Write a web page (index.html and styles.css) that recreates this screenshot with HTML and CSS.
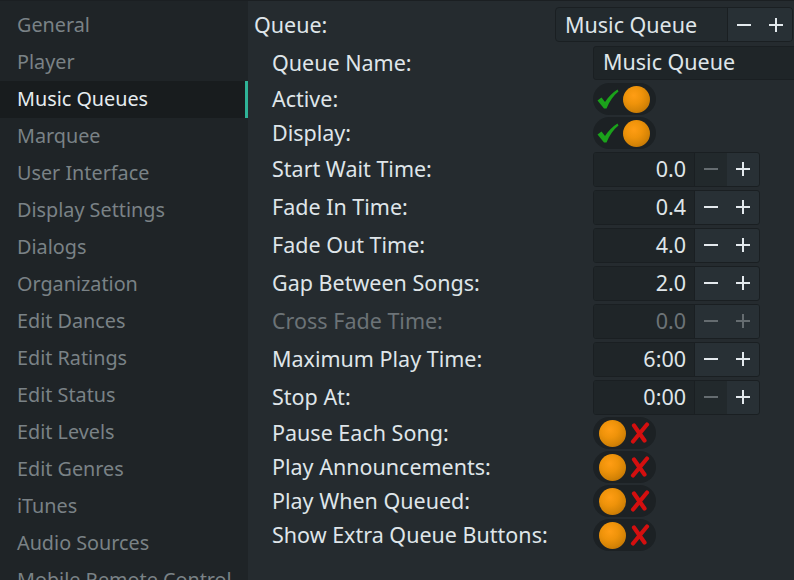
FILE: index.html
```html
<!DOCTYPE html>
<html>
<head>
<meta charset="utf-8">
<link rel="stylesheet" href="styles.css">
</head>
<body>
<div class="app">
  <nav class="sidebar">
    <div class="nav-item">General</div>
    <div class="nav-item">Player</div>
    <div class="nav-item selected">Music Queues</div>
    <div class="nav-item">Marquee</div>
    <div class="nav-item">User Interface</div>
    <div class="nav-item">Display Settings</div>
    <div class="nav-item">Dialogs</div>
    <div class="nav-item">Organization</div>
    <div class="nav-item">Edit Dances</div>
    <div class="nav-item">Edit Ratings</div>
    <div class="nav-item">Edit Status</div>
    <div class="nav-item">Edit Levels</div>
    <div class="nav-item">Edit Genres</div>
    <div class="nav-item">iTunes</div>
    <div class="nav-item">Audio Sources</div>
    <div class="nav-item">Mobile Remote Control</div>
  </nav>
  <main class="main">
    <div class="queue-row">
      <div class="queue-label">Queue:</div>
      <div class="combo">
        <div class="combo-text">Music Queue</div>
        <div class="combo-btns">
          <span class="sbtn"><svg width="14" height="14" viewBox="0 0 14 14"><path d="M0 7H14" stroke="currentColor" stroke-width="2"/></svg></span>
          <span class="sbtn"><svg width="14" height="14" viewBox="0 0 14 14"><path d="M0 7H14M7 0V14" stroke="currentColor" stroke-width="2"/></svg></span>
        </div>
      </div>
    </div>
    <div class="form">
      <div class="row r38"><div class="label">Queue Name:</div><div class="entry">Music Queue</div></div>

      <div class="row r34"><div class="label">Active:</div>
        <div class="toggle on"><svg class="check" width="22" height="20" viewBox="0 0 22 20"><path d="M0.5 11.5 L4.5 8.5 L8 13 C11.5 8 15.5 3.5 20.5 0.5 L21.5 2.5 C16.5 6.5 12.5 12 9.5 19.5 L7 19.5 Z" fill="#1ba21b"/></svg><span class="knob"></span></div>
      </div>
      <div class="row r34"><div class="label">Display:</div>
        <div class="toggle on"><svg class="check" width="22" height="20" viewBox="0 0 22 20"><path d="M0.5 11.5 L4.5 8.5 L8 13 C11.5 8 15.5 3.5 20.5 0.5 L21.5 2.5 C16.5 6.5 12.5 12 9.5 19.5 L7 19.5 Z" fill="#1ba21b"/></svg><span class="knob"></span></div>
      </div>

      <div class="row r38"><div class="label">Start Wait Time:</div>
        <div class="spin"><div class="spin-val">0.0</div>
          <span class="sbtn dis"><svg width="14" height="14" viewBox="0 0 14 14"><path d="M0 7H14" stroke="currentColor" stroke-width="2"/></svg></span>
          <span class="sbtn"><svg width="14" height="14" viewBox="0 0 14 14"><path d="M0 7H14M7 0V14" stroke="currentColor" stroke-width="2"/></svg></span>
        </div>
      </div>
      <div class="row r38"><div class="label">Fade In Time:</div>
        <div class="spin"><div class="spin-val">0.4</div>
          <span class="sbtn"><svg width="14" height="14" viewBox="0 0 14 14"><path d="M0 7H14" stroke="currentColor" stroke-width="2"/></svg></span>
          <span class="sbtn"><svg width="14" height="14" viewBox="0 0 14 14"><path d="M0 7H14M7 0V14" stroke="currentColor" stroke-width="2"/></svg></span>
        </div>
      </div>
      <div class="row r38"><div class="label">Fade Out Time:</div>
        <div class="spin"><div class="spin-val">4.0</div>
          <span class="sbtn"><svg width="14" height="14" viewBox="0 0 14 14"><path d="M0 7H14" stroke="currentColor" stroke-width="2"/></svg></span>
          <span class="sbtn"><svg width="14" height="14" viewBox="0 0 14 14"><path d="M0 7H14M7 0V14" stroke="currentColor" stroke-width="2"/></svg></span>
        </div>
      </div>
      <div class="row r38"><div class="label">Gap Between Songs:</div>
        <div class="spin"><div class="spin-val">2.0</div>
          <span class="sbtn"><svg width="14" height="14" viewBox="0 0 14 14"><path d="M0 7H14" stroke="currentColor" stroke-width="2"/></svg></span>
          <span class="sbtn"><svg width="14" height="14" viewBox="0 0 14 14"><path d="M0 7H14M7 0V14" stroke="currentColor" stroke-width="2"/></svg></span>
        </div>
      </div>
      <div class="row r38 disabled"><div class="label">Cross Fade Time:</div>
        <div class="spin"><div class="spin-val">0.0</div>
          <span class="sbtn dis"><svg width="14" height="14" viewBox="0 0 14 14"><path d="M0 7H14" stroke="currentColor" stroke-width="2"/></svg></span>
          <span class="sbtn dis"><svg width="14" height="14" viewBox="0 0 14 14"><path d="M0 7H14M7 0V14" stroke="currentColor" stroke-width="2"/></svg></span>
        </div>
      </div>
      <div class="row r38"><div class="label">Maximum Play Time:</div>
        <div class="spin"><div class="spin-val">6:00</div>
          <span class="sbtn"><svg width="14" height="14" viewBox="0 0 14 14"><path d="M0 7H14" stroke="currentColor" stroke-width="2"/></svg></span>
          <span class="sbtn"><svg width="14" height="14" viewBox="0 0 14 14"><path d="M0 7H14M7 0V14" stroke="currentColor" stroke-width="2"/></svg></span>
        </div>
      </div>
      <div class="row r38"><div class="label">Stop At:</div>
        <div class="spin"><div class="spin-val">0:00</div>
          <span class="sbtn dis"><svg width="14" height="14" viewBox="0 0 14 14"><path d="M0 7H14" stroke="currentColor" stroke-width="2"/></svg></span>
          <span class="sbtn"><svg width="14" height="14" viewBox="0 0 14 14"><path d="M0 7H14M7 0V14" stroke="currentColor" stroke-width="2"/></svg></span>
        </div>
      </div>

      <div class="row r34"><div class="label">Pause Each Song:</div>
        <div class="toggle off"><span class="knob"></span><svg class="cross" width="20" height="22" viewBox="0 0 20 22"><path d="M4 3.5 L14.5 18.5 M17 2.5 L3 19.5" stroke="#d40f0f" stroke-width="4.2" stroke-linecap="round"/></svg></div>
      </div>
      <div class="row r34"><div class="label">Play Announcements:</div>
        <div class="toggle off"><span class="knob"></span><svg class="cross" width="20" height="22" viewBox="0 0 20 22"><path d="M4 3.5 L14.5 18.5 M17 2.5 L3 19.5" stroke="#d40f0f" stroke-width="4.2" stroke-linecap="round"/></svg></div>
      </div>
      <div class="row r34"><div class="label">Play When Queued:</div>
        <div class="toggle off"><span class="knob"></span><svg class="cross" width="20" height="22" viewBox="0 0 20 22"><path d="M4 3.5 L14.5 18.5 M17 2.5 L3 19.5" stroke="#d40f0f" stroke-width="4.2" stroke-linecap="round"/></svg></div>
      </div>
      <div class="row r34"><div class="label">Show Extra Queue Buttons:</div>
        <div class="toggle off"><span class="knob"></span><svg class="cross" width="20" height="22" viewBox="0 0 20 22"><path d="M4 3.5 L14.5 18.5 M17 2.5 L3 19.5" stroke="#d40f0f" stroke-width="4.2" stroke-linecap="round"/></svg></div>
      </div>
    </div>
  </main>
</div>
</body>
</html>
```
FILE: styles.css
```css
html, body {
  margin: 0;
  padding: 0;
  height: 100%;
  overflow: hidden;
  background: #252b2f;
  font-family: "Noto Sans", "Open Sans", sans-serif;
  font-size: 20px;
  color: #dfe5e9;
}

.app {
  display: flex;
  height: 580px;
  box-sizing: border-box;
  border-top: 1px solid #1b1f22;
}

.sidebar {
  width: 248px;
  flex: none;
  background: #1f2427;
  padding-top: 6px;
  box-sizing: border-box;
  overflow: hidden;
  font-size: 19.8px;
}

.nav-item {
  height: 37px;
  box-sizing: border-box;
  line-height: 36px;
  padding-bottom: 1px;
  padding-left: 17px;
  color: #7a8286;
  white-space: nowrap;
}

.nav-item.selected {
  background: #181c1e;
  color: #e6ecf0;
  box-shadow: inset -3px 0 0 #2fb397;
}

.main {
  flex: 1;
  padding: 6px 0 0 6px;
  overflow: hidden;
  min-width: 0;
  font-size: 21.5px;
}

.queue-row {
  display: flex;
  align-items: center;
  height: 35px;
}

.queue-label {
  width: 301px;
  flex: none;
}

.combo {
  display: flex;
  width: 238px;
  height: 35px;
  box-sizing: border-box;
  border: 1px solid #1a1f22;
  border-radius: 4px;
  background: #232a2e;
  overflow: hidden;
  flex: none;
}

.combo-text {
  flex: 1;
  padding-left: 9px;
  line-height: 33px;
  border-right: 1px solid #1a1f22;
}

.combo-btns {
  display: flex;
  background: #283035;
}

.form {
  margin-top: 2px;
  padding-left: 18px;
}

.row {
  display: flex;
  align-items: center;
}

.r38 { height: 38px; }
.r34 { height: 34px; }

.label {
  width: 321px;
  flex: none;
  white-space: nowrap;
  padding-bottom: 2px;
}

.disabled .label { color: #6c7377; }

.entry {
  width: 220px;
  height: 34px;
  box-sizing: border-box;
  border: 1px solid #1a1f22;
  border-radius: 3px;
  background: #1f2528;
  padding-left: 9px;
  line-height: 30px;
  flex: none;
}

.toggle {
  display: flex;
  align-items: center;
  width: 63px;
  height: 32px;
  border-radius: 16px;
  background: #1c2124;
  box-sizing: border-box;
  flex: none;
  justify-content: space-between;
}

.toggle.on { padding: 0 6px 0 4px; }
.toggle.off { padding: 0 6px 0 6px; }

.knob {
  width: 27px;
  height: 27px;
  border-radius: 50%;
  background: radial-gradient(circle at 40% 35%, #ff9d14 0%, #ef930a 35%, #d48306 65%, #a86405 100%);
}

.check { display: block; }
.cross { display: block; }

.spin {
  display: flex;
  width: 167px;
  height: 35px;
  box-sizing: border-box;
  border: 1px solid #1a1f22;
  border-radius: 3px;
  overflow: hidden;
  background: #283035;
  flex: none;
}

.spin-val {
  width: 101px;
  flex: none;
  box-sizing: border-box;
  background: #1f2528;
  border-right: 1px solid #1a1f22;
  text-align: right;
  padding-right: 8px;
  line-height: 31px;
}

.disabled .spin-val { color: #6c7377; }

.sbtn {
  width: 32px;
  display: flex;
  align-items: center;
  justify-content: center;
  color: #e3e9ed;
}

.sbtn svg { display: block; }

.sbtn.dis {
  color: #656c70;
}

.spin .sbtn.dis:first-of-type { background: #22292c; }
.disabled .spin .sbtn.dis { background: #283035; }
```
